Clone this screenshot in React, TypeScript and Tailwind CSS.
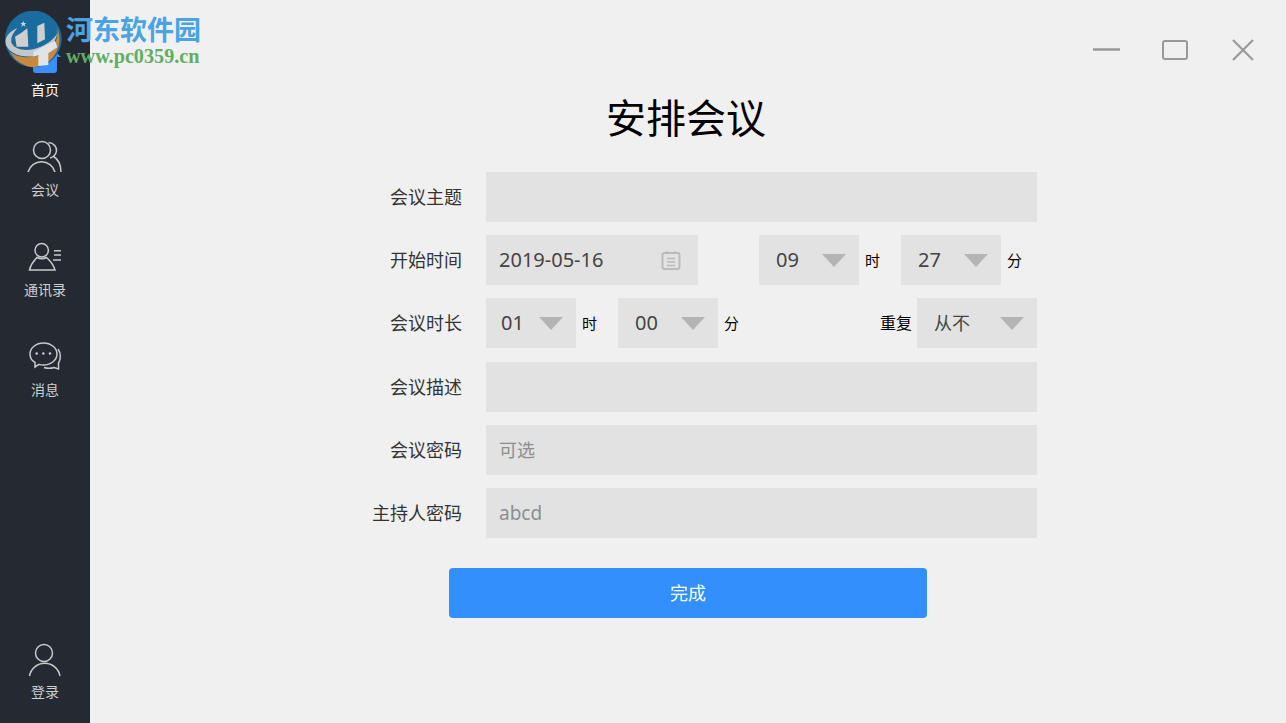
const cjk = "font-['Noto_Sans','Noto_Sans_CJK_SC',sans-serif]";

const Arrow = () => (
  <svg width="24" height="13" viewBox="0 0 24 13" className="absolute right-[13px] top-[19px]">
    <polygon points="0,0 24,0 12,13" fill="#b4b4b4" />
  </svg>
);

const Select = ({ value, width, pad = 'pl-[17px]', text = 'text-[20px]' }: { value: string; width: string; pad?: string; text?: string }) => (
  <div className={`relative h-[50px] ${width} ${pad} ${text} bg-[#e2e2e2] flex items-center text-[#444]`}>
    {value}
    <Arrow />
  </div>
);

const Unit = ({ children, className = '' }: { children: string; className?: string }) => (
  <span className={`text-black ${className}`}>{children}</span>
);

const Row = ({ label, children, top = 'mt-[13px]' }: { label: string; children?: React.ReactNode; top?: string }) => (
  <div className={`flex items-center h-[50px] ${top}`}>
    <label className="w-[123px] mr-[24px] pt-[1px] text-right text-[18px] text-[#333]">{label}</label>
    <div className="w-[551px] h-[50px] flex items-center">{children}</div>
  </div>
);

const TextField = ({ placeholder, text = 'text-[18px]' }: { placeholder?: string; text?: string }) => (
  <input
    readOnly
    placeholder={placeholder}
    className={`w-full h-full bg-[#e2e2e2] px-[13px] ${text} outline-none placeholder:text-[#8e8e8e]`}
  />
);

const NavItem = ({ label, active, children }: { label: string; active?: boolean; children: React.ReactNode }) => (
  <div className="h-[100px] flex flex-col items-center">
    <svg width="40" height="40" viewBox="0 0 40 40" fill="none" stroke="#c9c9c9" strokeWidth="1.5">
      {children}
    </svg>
    <span className={`mt-[4px] h-[20px] leading-[20px] text-[14px] ${active ? 'text-white' : 'text-[#cfcfcf]'}`}>{label}</span>
  </div>
);

// site watermark that sits over the top left corner
const Watermark = () => (
  <div className="absolute left-[5px] top-[11px] flex pointer-events-none">
    <svg width="58" height="58" viewBox="15 33 174 174">
      <circle cx="100" cy="117" r="85" fill="#1a6c9f" />
      <path d="M30 155 C60 180 120 175 150 150 C165 135 175 115 172 85 A85 85 0 0 1 100 202 A85 85 0 0 1 30 155Z" fill="#c9883c" />
      <path d="M52 84 C22 96 8 122 22 142 C40 172 100 178 130 158 C150 145 165 130 172 100 C160 120 140 135 110 145 C80 155 45 150 35 130 C30 115 38 100 52 84Z" fill="#c6c6c6" />
      <polygon points="45,110 62,100 82,85 85,140 50,140" fill="#cfcfcf" />
      <polygon points="112,78 133,68 135,118 112,130" fill="#cfcfcf" />
      <polygon points="100,155 165,122 172,142 145,160 145,195 115,198 115,165 100,170" fill="#dfe4e8" />
      <polygon points="70,63 72.5,69 79,69 74,73 76,80 70,76 64,80 66,73 61,69 67.5,69" fill="#c4d8e6" />
    </svg>
    <div className="ml-[3px] -mt-[1px] flex flex-col">
      <span className="h-[37px] leading-[37px] text-[27px] font-bold text-[#4ba3e3] font-['Noto_Sans_CJK_SC',sans-serif]">河东软件园</span>
      <span className="h-[18px] leading-[18px] text-[20.2px] font-bold text-[#62ad62] font-['Liberation_Serif',serif]">www.pc0359.cn</span>
    </div>
  </div>
);

export default function App() {
  return (
    <div className={`relative flex w-[1286px] h-[723px] overflow-hidden bg-[#f0f0f0] ${cjk}`}>
      <aside className="w-[90px] h-full bg-[#252a32] flex flex-col pt-[36px]">
        <NavItem label="首页" active>
          <path d="M4 21 L20 5 L36 21 H32 V34 Q32 37 29 37 H11 Q8 37 8 34 V21 Z" fill="#3a8ffb" stroke="none" />
        </NavItem>
        <NavItem label="会议">
          <circle cx="17" cy="14" r="8.5" />
          <path d="M3 36 A14 14 0 0 1 30 36" />
          <path d="M23.5 6.5 C29 7 32 11 31.5 15 C31 18 28.5 21 25 22" />
          <path d="M28 20 C33 23 36 29 36 36" />
        </NavItem>
        <NavItem label="通讯录">
          <circle cx="16.7" cy="14.3" r="6.7" />
          <path d="M4.5 34 C6 27 10 24 12 21.5 Q17 24 21.5 21.5 C24 24 28 27 30 34 Z" />
          <path d="M29 14.7 H36 M29 19 H36 M28 24 H36" />
        </NavItem>
        <NavItem label="消息">
          <path d="M18.5 7 C26 7 32 12 32 18 C32 24 26 29 18.5 29 C17 29 15.5 28.8 14 28.4 L10 31 L10 26.5 C6.5 24.5 5 21.5 5 18 C5 12 11 7 18.5 7Z" />
          <path d="M33 13 C36 17 36 23 33.5 27 L33.5 33 L29 31.5 C26 32.5 22 32.5 19 31.5" />
          <circle cx="11.7" cy="17.5" r="1.3" fill="#c9c9c9" stroke="none" />
          <circle cx="18.3" cy="17.5" r="1.3" fill="#c9c9c9" stroke="none" />
          <circle cx="25" cy="17.5" r="1.3" fill="#c9c9c9" stroke="none" />
        </NavItem>
        <div className="mt-auto">
          <div className="h-[85px]">
            <NavItem label="登录">
              <circle cx="19" cy="15" r="8.5" />
              <path d="M4.5 38 A15.5 15.5 0 0 1 35 38" />
            </NavItem>
          </div>
        </div>
      </aside>

      <main className="flex-1 flex flex-col">
        <div className="h-[92px] flex justify-end pt-[38px] pr-[32px]">
          <svg width="161" height="24" viewBox="0 0 161 24" fill="none" stroke="#999" strokeWidth="2.5">
            <path d="M0 11.5 H27" />
            <rect x="70" y="3" width="24" height="18" rx="2" strokeWidth="2" />
            <path d="M140 2 L160 22 M160 2 L140 22" strokeWidth="2.2" />
          </svg>
        </div>
        <h1 className="h-[50px] leading-[50px] pt-[1px] pr-[4px] text-center text-[40px] text-black">安排会议</h1>
        <div className="w-[698px] mx-auto mt-[30px]">
          <Row label="会议主题" top="">
            <TextField />
          </Row>
          <Row label="开始时间">
            <div className="relative w-[212px] h-full pl-[13px] bg-[#e2e2e2] flex items-center text-[20px] text-[#444]">
              2019-05-16
              <svg width="20" height="20" viewBox="0 0 20 20" fill="none" stroke="#bbb" strokeWidth="2" className="absolute right-[17px] top-[15px]">
                <rect x="1.5" y="3" width="17" height="16" rx="2" />
                <path d="M6 1 V4 M14 1 V4 M6 8.5 H14 M6 12 H14 M6 15.5 H14" strokeWidth="1.5" />
              </svg>
            </div>
            <div className="ml-[61px]"><Select value="09" width="w-[100px]" /></div>
            <Unit className="ml-[6px] text-[15px]">时</Unit>
            <div className="ml-[21px]"><Select value="27" width="w-[100px]" /></div>
            <Unit className="ml-[6px] text-[15px]">分</Unit>
          </Row>
          <Row label="会议时长">
            <Select value="01" width="w-[90px]" pad="pl-[15px]" />
            <Unit className="ml-[6px] text-[15px]">时</Unit>
            <div className="ml-[21px]"><Select value="00" width="w-[100px]" /></div>
            <Unit className="ml-[6px] text-[15px]">分</Unit>
            <Unit className="ml-auto mr-[5px] text-[16px]">重复</Unit>
            <Select value="从不" width="w-[120px]" text="text-[18px]" />
          </Row>
          <Row label="会议描述" top="mt-[14px]">
            <TextField />
          </Row>
          <Row label="会议密码">
            <TextField placeholder="可选" />
          </Row>
          <Row label="主持人密码">
            <TextField placeholder="abcd" text="text-[19px]" />
          </Row>
          <button className="block w-[478px] h-[50px] mx-auto mt-[30px] rounded-[4px] bg-[#338ffb] text-[18px] text-white">完成</button>
        </div>
      </main>

      <Watermark />
    </div>
  );
}
